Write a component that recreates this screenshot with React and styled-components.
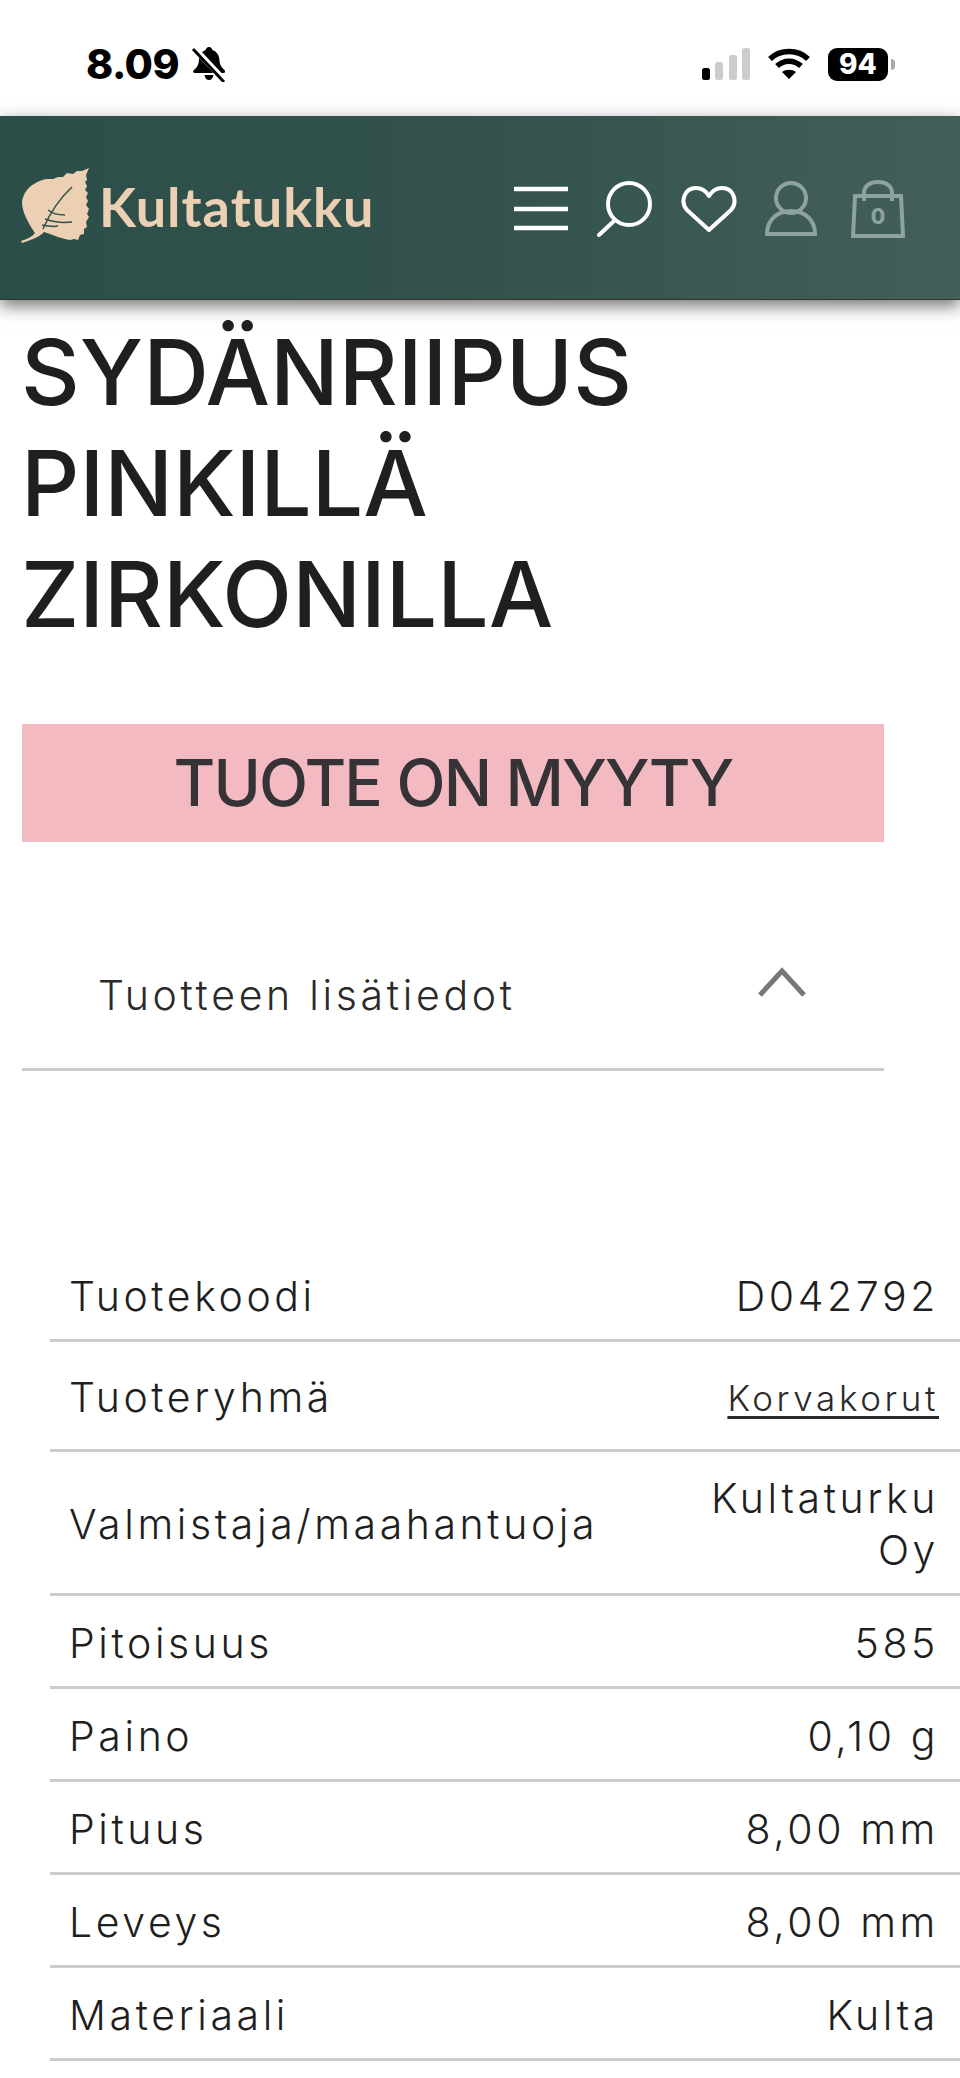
import React from 'react';
import styled, { createGlobalStyle } from 'styled-components';

const Global = createGlobalStyle`
  html, body { margin: 0; padding: 0; background: #fff; }
  body { font-family: "Inter", "Liberation Sans", sans-serif; width: 960px; height: 2078px; overflow: hidden; }
`;
const Page = styled.div`width: 960px; height: 2078px; overflow: hidden; display: flex; flex-direction: column;`;
const StatusBar = styled.div`
  height: 116px; flex: none; display: flex; align-items: center; justify-content: space-between;
  padding: 12px 72px 0 86px; box-sizing: border-box; background: #fff;
`;
const StatusLeft = styled.div`display: flex; align-items: center; gap: 12px;`;
const StatusRight = styled.div`display: flex; align-items: center; gap: 18px;`;
const Time = styled.span`font: 800 41px/1 "Inter", sans-serif; color: #000; letter-spacing: -0.5px;`;
const Battery = styled.span`
  position: relative; width: 60px; height: 33px; border-radius: 9px; background: #000; color: #fff;
  font: 800 28px/33px "Inter", sans-serif; text-align: center;
  &::after { content: ""; position: absolute; right: -7px; top: 11px; width: 4px; height: 11px; border-radius: 0 4px 4px 0; background: #aaa; }
`;
const Header = styled.header`
  height: 184px; flex: none; display: flex; align-items: center; justify-content: space-between; box-sizing: border-box;
  padding: 0 55px 0 20px; background: linear-gradient(90deg, #2c4e49 0%, #32514c 45%, #435f59 100%);
  box-shadow: 0 6px 16px rgba(0,0,0,.55); border-bottom: 1px solid #333; position: relative; z-index: 2;
`;
const Logo = styled.div`display: flex; align-items: center; gap: 7px; margin-top: -4px;`;
const LogoText = styled.span`font: 700 54px/1 "Lato", sans-serif; color: #ebd0b4; letter-spacing: 1px; margin-top: 2px;`;
const Icons = styled.nav`display: flex; align-items: center; gap: 28px; padding-top: 2px;`;
const BagSlot = styled.span`display: flex; margin-left: 6px;`;
const Main = styled.main`flex: 1; display: flex; flex-direction: column; padding-left: 21px;`;
const Title = styled.h1`
  margin: 17px 0 0; width: 700px; font: 500 91px/111px "Inter", sans-serif; color: #1f1f1f; letter-spacing: 0;
`;
const SoldBanner = styled.div`
  margin: 74px 0 0 1px; width: 862px; height: 118px; background: #f3bbc1; color: #353336;
  display: flex; align-items: center; justify-content: center; font: 500 64px/1 "Inter", sans-serif; letter-spacing: -1.8px;
`;
const Accordion = styled.div`
  margin: 89px 0 0 1px; width: 862px; height: 140px; box-sizing: border-box; border-bottom: 3px solid #ccc;
  display: flex; align-items: center; justify-content: space-between; padding: 0 78px 22px 76px;
`;
const AccordionLabel = styled.span`font: 300 41px/1 "Inter", sans-serif; letter-spacing: 3.7px; color: #2a2a2a; padding-top: 14px;`;
const ChevronSlot = styled.span`display: flex; margin-bottom: 12px;`;
const Specs = styled.div`margin: 178px 0 0 29px; width: 910px;`;
const Row = styled.div`
  display: flex; align-items: center; justify-content: space-between; box-sizing: border-box;
  border-bottom: 3px solid #ccc; padding: 20px 21px 17px 19px; min-height: ${p => p.$tall ? 110 : 93}px;
  font: 300 41px/52px "Inter", sans-serif; letter-spacing: 3.6px; color: #1f1f1f;
`;
const Value = styled.span`text-align: right; max-width: 280px; white-space: ${p => p.$wrap ? 'normal' : 'nowrap'};`;
const Link = styled.a`color: #2a2a2a; text-decoration: underline; font-size: 35px; text-underline-offset: 5px;`;

const Bell = () => (
  <svg width="36" height="36" viewBox="0 0 36 36" fill="#000">
    <path d="M18 1c2 0 3 1.400 3.400 3 4.600 1.600 6.800 5.600 7 10 .2 4 1.600 7 5 10 1 1 1 3-1 3H4c-2 0-2.500-2-1-3 3.500-3 5-6 5-10.500 0-4.500 2.600-8 6.600-9.500C15 2.400 16 1 18 1z" />
    <path d="M13.500 29h9c-.5 3-2.200 5-4.500 5s-4-2-4.500-5z" />
    <path d="M3 2l31 33" stroke="#fff" strokeWidth="6" />
    <path d="M2 3l31 33" stroke="#000" strokeWidth="3" />
  </svg>
);
const Signal = () => (
  <svg width="48" height="32" viewBox="0 0 48 32">
    <rect x="0" y="20" width="8" height="12" rx="2.500" fill="#000" />
    <rect x="13" y="14" width="8" height="18" rx="2.500" fill="#ccc" />
    <rect x="27" y="7" width="8" height="25" rx="2.500" fill="#ccc" />
    <rect x="40" y="0" width="8" height="32" rx="2.500" fill="#ccc" />
  </svg>
);
const Wifi = () => (
  <svg width="42" height="32" viewBox="0 0 42 32" fill="none" stroke="#000" strokeWidth="5.500">
    <path d="M2 11C12 1 30 1 40 11" />
    <path d="M9 18c7-6.500 17-6.500 24 0" />
    <path d="M21 31l-7-7c4-3 10-3 14 0z" fill="#000" stroke="none" />
  </svg>
);
const Leaf = () => (
  <svg width="72" height="78" viewBox="0 0 72 78">
    <path fill="#ebd0b4" d="M69 1L66 8L67 13L65 15L67 19L65 23L68 26L66 30L68 34L66 38L69 42L67 47L69 50L66 55L67 60L64 62L64 67L60 68L58 73L54 72L50 73L45 72L38 70L30 67L24 65L22 67C17 71 10 73 2 76L1 74C7 72 12 70 15 66L11 60C5 50 2 42 2 35C3 27 8 20 14 17C18 14 24 12 28 12L33 12L38 10L43 10L47 6L53 7L57 4L62 4Z" />
    <path fill="none" stroke="#2f4f4a" strokeWidth="1.500" d="M23 62C30 46 40 31 52 20M28 43C33 47 39 48 45 48M25 52C33 55 43 56 52 55M22 58C27 59 33 60 38 59" />
  </svg>
);
const Menu = () => (
  <svg width="56" height="46" viewBox="0 0 56 46" stroke="#fff" strokeWidth="4.500"><path d="M1 3h54M1 23h54M1 42h54" /></svg>
);
const Search = () => (
  <svg width="56" height="56" viewBox="0 0 56 56" fill="none" stroke="#fff" strokeWidth="4" strokeLinecap="round">
    <circle cx="32" cy="23" r="21" /><path d="M17 40L2 54" />
  </svg>
);
const Heart = () => (
  <svg width="56" height="48" viewBox="0 0 56 48" fill="none" stroke="#fff" strokeWidth="4" strokeLinejoin="round">
    <path d="M28 45L6 25C-1 17 3 3 15 3c6 0 10 3 13 8 3-5 7-8 13-8 12 0 16 14 9 22z" />
  </svg>
);
const User = () => (
  <svg width="52" height="56" viewBox="0 0 52 56" fill="none" stroke="#8ea3a0" strokeWidth="4">
    <circle cx="26" cy="17" r="15" /><path d="M2 53c0-14 10-23 24-23s24 9 24 23z" />
  </svg>
);
const BagLabel = styled.text`font: 800 21px "Inter", sans-serif; fill: #8ea3a0;`;
const Bag = () => (
  <svg width="54" height="58" viewBox="0 0 54 58" fill="none" stroke="#8ea3a0" strokeWidth="4">
    <path d="M4 16h46l2 40H2z" />
    <path d="M13 21V13C13 6 19 2 27 2s14 4 14 11v8" />
    <BagLabel x="27" y="44" textAnchor="middle" stroke="none">0</BagLabel>
  </svg>
);
const Chevron = () => (
  <svg width="48" height="32" viewBox="0 0 48 32" fill="none" stroke="#777" strokeWidth="5"><path d="M2 28L24 4l22 24" /></svg>
);

const specs = [
  ['Tuotekoodi', 'D042792'],
  ['Tuoteryhmä', <Link href="#">Korvakorut</Link>, true],
  ['Valmistaja/maahantuoja', 'Kultaturku Oy'],
  ['Pitoisuus', '585'],
  ['Paino', '0,10 g'],
  ['Pituus', '8,00 mm'],
  ['Leveys', '8,00 mm'],
  ['Materiaali', 'Kulta'],
];

export default function App() {
  return (
    <Page>
      <Global />
      <StatusBar>
        <StatusLeft><Time>8.09</Time><Bell /></StatusLeft>
        <StatusRight><Signal /><Wifi /><Battery>94</Battery></StatusRight>
      </StatusBar>
      <Header>
        <Logo><Leaf /><LogoText>Kultatukku</LogoText></Logo>
        <Icons><Menu /><Search /><Heart /><User /><BagSlot><Bag /></BagSlot></Icons>
      </Header>
      <Main>
        <Title>SYDÄNRIIPUS PINKILLÄ ZIRKONILLA</Title>
        <SoldBanner>TUOTE ON MYYTY</SoldBanner>
        <Accordion><AccordionLabel>Tuotteen lisätiedot</AccordionLabel><ChevronSlot><Chevron /></ChevronSlot></Accordion>
        <Specs>
          {specs.map(([k, v, tall], i) => (
            <Row key={i} $tall={tall}><span>{k}</span><Value $wrap={k.startsWith('Valm')}>{v}</Value></Row>
          ))}
        </Specs>
      </Main>
    </Page>
  );
}
